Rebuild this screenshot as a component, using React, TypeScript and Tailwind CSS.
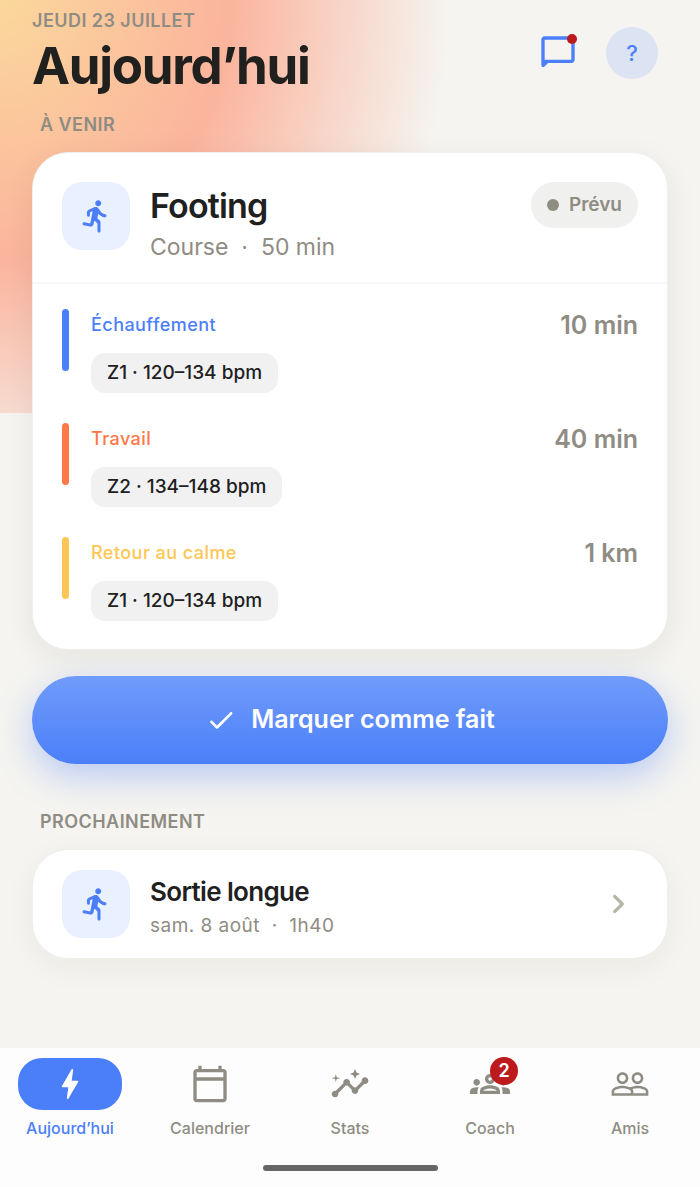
import React from "react";
import {
  MdInsights,
  MdOutlineCalendarToday,
  MdOutlineGroups,
  MdPeopleOutline,
} from "react-icons/md";

interface IconProps {
  className?: string;
}

const RunIcon: React.FC<IconProps> = ({ className }) => (
  <svg viewBox="0 0 24 24" fill="currentColor" className={className} aria-hidden="true">
    <path d="M13.49 5.48c1.1 0 2-.9 2-2s-.9-2-2-2-2 .9-2 2 .9 2 2 2zm-3.6 13.9l1-4.4 2.1 2v5c0 .55.45 1 1 1s1-.45 1-1v-5.64c0-.55-.22-1.07-.62-1.45l-1.48-1.41.6-3c1.07 1.24 2.62 2.13 4.36 2.41.6.09 1.14-.39 1.14-1 0-.49-.36-.9-.85-.98-1.52-.25-2.78-1.15-3.45-2.33l-1-1.6c-.4-.6-1-1-1.7-1-.3 0-.5.1-.8.1l-4 1.69c-.74.31-1.22 1.04-1.22 1.84v1.87c0 .55.45 1 1 1s1-.45 1-1v-1.9l1.8-.7-1.6 8.1-3.92-.8c-.54-.11-1.07.24-1.18.78v.04c-.11.54.24 1.07.78 1.18l4.11.82c1.06.21 2.1-.46 2.34-1.52z" />
  </svg>
);

const BoltIcon: React.FC<IconProps> = ({ className }) => (
  <svg viewBox="0 0 24 24" fill="currentColor" className={className} aria-hidden="true">
    <path d="M10.67 21c-.35 0-.62-.31-.57-.66L11 14H7.5c-.88 0-.33-.75-.31-.78 1.26-2.23 3.15-5.53 5.65-9.93.1-.18.3-.29.5-.29.35 0 .62.31.57.66L13.01 10h3.51c.4 0 .62.19.4.66-3.29 5.74-5.2 9.09-5.75 10.05-.1.18-.29.29-.5.29z" />
  </svg>
);

const ChatIcon: React.FC<IconProps> = ({ className }) => (
  <svg viewBox="0 0 24 24" fill="currentColor" className={className} aria-hidden="true">
    <path
      fillRule="evenodd"
      d="M4 2h16c1.1 0 2 .9 2 2v12c0 1.1-.9 2-2 2H6l-2.1 2.1c-.7.7-1.9.2-1.9-.8V4c0-1.1.9-2 2-2zM4 4v12h16V4z"
    />
  </svg>
);

const CheckIcon: React.FC<IconProps> = ({ className }) => (
  <svg viewBox="0 0 24 24" fill="currentColor" className={className} aria-hidden="true">
    <path d="M9 16.17L5.53 12.7c-.39-.39-1.02-.39-1.41 0-.39.39-.39 1.02 0 1.41l4.18 4.18c.39.39 1.02.39 1.41 0L20.29 7.71c.39-.39.39-1.02 0-1.41-.39-.39-1.02-.39-1.41 0L9 16.17z" />
  </svg>
);

const ChevronIcon: React.FC<IconProps> = ({ className }) => (
  <svg viewBox="0 0 24 24" fill="currentColor" className={className} aria-hidden="true">
    <path d="M9.29 6.71c-.39.39-.39 1.02 0 1.41L13.17 12l-3.88 3.88c-.39.39-.39 1.02 0 1.41.39.39 1.02.39 1.41 0l4.59-4.59c.39-.39.39-1.02 0-1.41L10.7 6.7c-.38-.38-1.02-.38-1.41.01z" />
  </svg>
);

const steps = [
  {
    name: "Échauffement",
    zone: "Z1 · 120–134 bpm",
    amount: "10 min",
    bar: "bg-[#4b7ff9]",
    text: "text-[#4b7ff9]",
  },
  {
    name: "Travail",
    zone: "Z2 · 134–148 bpm",
    amount: "40 min",
    bar: "bg-[#ff7848]",
    text: "text-[#ff7848]",
  },
  {
    name: "Retour au calme",
    zone: "Z1 · 120–134 bpm",
    amount: "1 km",
    bar: "bg-[#ffc653]",
    text: "text-[#ffc653]",
  },
];

const navItems = [
  { name: "Aujourd’hui", href: "#today", icon: BoltIcon, active: true, badge: 0 },
  { name: "Calendrier", href: "#calendar", icon: MdOutlineCalendarToday, active: false, badge: 0 },
  { name: "Stats", href: "#stats", icon: MdInsights, active: false, badge: 0 },
  { name: "Coach", href: "#coach", icon: MdOutlineGroups, active: false, badge: 2 },
  { name: "Amis", href: "#friends", icon: MdPeopleOutline, active: false, badge: 0 },
];

const SportTile = () => (
  <div className="flex size-[68px] shrink-0 items-center justify-center rounded-[20px] bg-[#e9f0ff] text-[#4b7ff9]">
    <RunIcon className="size-9" />
  </div>
);

const Header = () => (
  <header className="flex items-start justify-between pt-[9px] pr-[10px]">
    <div>
      <p className="text-lg leading-6 font-semibold tracking-wide text-[#8f8c83]">JEUDI 23 JUILLET</p>
      <h1 className="text-[51px] leading-[66px] font-bold tracking-tight text-[#20201f]">Aujourd’hui</h1>
    </div>
    <div className="mt-[18px] flex items-center gap-7">
      <button type="button" aria-label="Messages" className="relative text-[#4b7ff9]">
        <ChatIcon className="size-10" />
        <span className="absolute top-px right-px size-[10px] rounded-full bg-[#bc1a1c]" />
      </button>
      <button
        type="button"
        className="size-[52px] rounded-full bg-[#dce3f2] text-[22px] font-medium text-[#4b7ff9]"
      >
        ?
      </button>
    </div>
  </header>
);

const SessionCard = () => (
  <article className="rounded-[36px] border border-[#f0efec] bg-white shadow-[0_8px_32px_rgba(30,30,20,0.07)]">
    <div className="flex items-start gap-5 border-b-2 border-[#f8f8f8] px-[29px] pt-[29px] pb-[18px]">
      <SportTile />
      <div className="flex-1">
        <h3 className="text-[34px] leading-[48px] font-semibold tracking-tight text-[#20201f]">Footing</h3>
        <p className="text-[23px] leading-[34px] whitespace-pre text-[#8f8c83]">Course  ·  50 min</p>
      </div>
      <span className="flex h-[46px] items-center gap-[10px] rounded-full bg-[#f0f0ef] px-4 text-[19px] font-semibold text-[#8f8c83]">
        <span className="size-3 rounded-full bg-[#8f8c83]" />
        Prévu
      </span>
    </div>

    <ul className="flex flex-col gap-[30px] px-[29px] pt-[25px] pb-7">
      {steps.map((step) => (
        <li key={step.name} className="flex items-start">
          <span className={`h-[62px] w-[7px] rounded-full ${step.bar}`} />
          <div className="ml-[22px] flex flex-1 flex-col items-start gap-3">
            <span className={`text-lg leading-8 font-medium tracking-wide ${step.text}`}>{step.name}</span>
            <span className="flex h-10 items-center rounded-[14px] bg-[#f1f1f1] px-4 text-[19px] font-medium text-[#20201f]">
              {step.zone}
            </span>
          </div>
          <span className="text-[25px] leading-8 font-semibold text-[#8f8c83]">{step.amount}</span>
        </li>
      ))}
    </ul>
  </article>
);

const NextSession = () => (
  <a
    href="#next"
    className="flex items-center gap-5 rounded-[36px] border border-[#f0efec] bg-white px-[29px] py-5 shadow-[0_8px_32px_rgba(30,30,20,0.05)]"
  >
    <SportTile />
    <div className="flex-1">
      <h3 className="text-[26px] leading-[44px] font-semibold tracking-tight text-[#20201f]">Sortie longue</h3>
      <p className="text-[19px] leading-6 tracking-wide whitespace-pre text-[#8f8c83]">sam. 8 août  ·  1h40</p>
    </div>
    <ChevronIcon className="size-10 text-[#b8b6ab]" />
  </a>
);

const BottomNav = () => (
  <nav className="bg-[#fdfdfd] pt-[10px] pb-4">
    <div className="grid grid-cols-5">
      {navItems.map(({ name, href, icon: Icon, active, badge }) => (
        <a
          key={name}
          href={href}
          className={`flex flex-col items-center gap-[6px] ${active ? "text-[#4b7ff9]" : "text-[#8f8c83]"}`}
        >
          <span
            className={`relative flex h-[52px] w-[104px] items-center justify-center rounded-[24px] ${
              active ? "bg-[#4b7ff9] text-white" : ""
            }`}
          >
            <Icon className="size-10" />
            {badge > 0 && (
              <span className="absolute -top-px right-6 flex size-7 items-center justify-center rounded-full bg-[#bc1a1c] text-lg font-semibold text-white">
                {badge}
              </span>
            )}
          </span>
          <span className="text-base leading-6 font-medium">{name}</span>
        </a>
      ))}
    </div>
    {/* Home indicator */}
    <div className="mx-auto mt-[25px] h-[6px] w-1/4 rounded-full bg-[#666]" />
  </nav>
);

const App: React.FC = () => {
  return (
    <div className="relative isolate flex min-h-screen flex-col bg-[#f5f4f0] font-['Inter',sans-serif]">
      {/* Warm glow behind the header */}
      <div className="absolute inset-x-0 top-0 -z-10 h-[413px] bg-[radial-gradient(450px_510px_at_0_0,#fbd89c_0%,#fbb49d_51%,#f5f4f000_100%)]" />

      <main className="flex flex-1 flex-col px-8">
        <Header />

        <h2 className="mt-[14px] px-2 text-lg leading-6 font-semibold tracking-wide text-[#8f8c83]">À VENIR</h2>
        <div className="mt-[15px]">
          <SessionCard />
        </div>

        <button
          type="button"
          className="mt-[26px] flex h-[88px] items-center justify-center gap-[14px] rounded-full bg-linear-to-b from-[#709bfa] to-[#4b7ff9] text-[25px] font-semibold text-white shadow-[0_12px_36px_rgba(75,127,249,0.36)]"
        >
          <CheckIcon className="size-8" />
          Marquer comme fait
        </button>

        <h2 className="mt-[46px] px-2 text-lg leading-6 font-semibold tracking-wide text-[#8f8c83]">
          PROCHAINEMENT
        </h2>
        <div className="mt-[15px] pb-10">
          <NextSession />
        </div>
      </main>

      <BottomNav />
    </div>
  );
};

export default App;
